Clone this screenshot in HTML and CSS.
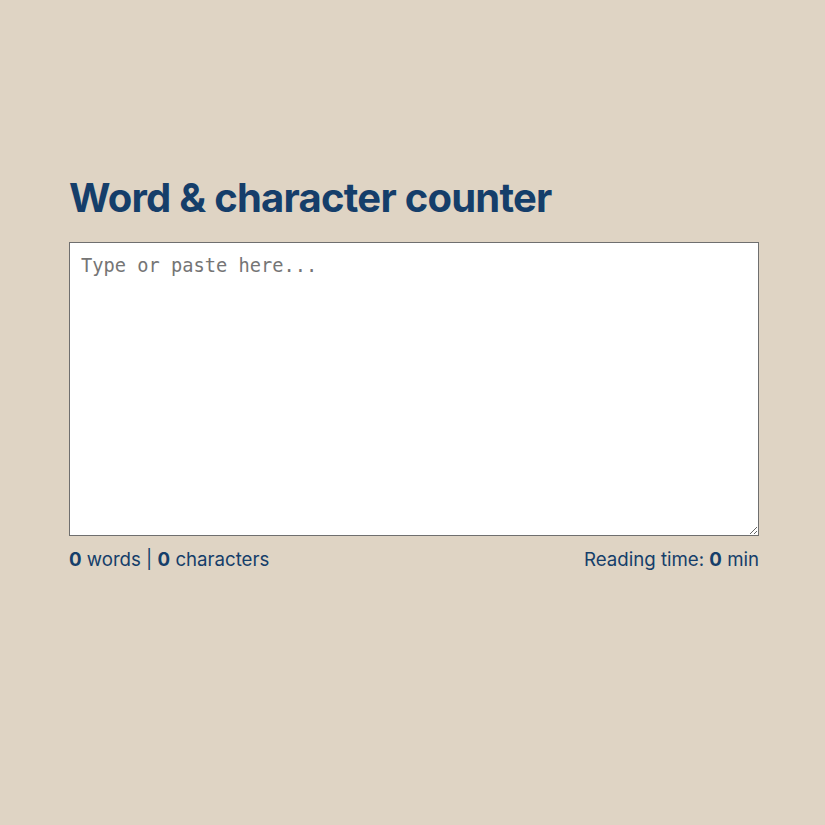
FILE: index.html
```html
<!DOCTYPE html>
<html lang="en">
<head>
  <meta charset="UTF-8">
  <meta name="viewport" content="width=device-width, initial-scale=1.0">
  <title>Word & character counter</title>
  <link rel="stylesheet" href="styles.css">
</head>
<body>
  <main class="counter">
    <h1>Word &amp; character counter</h1>
    <textarea id="text" placeholder="Type or paste here..."></textarea>
    <div class="stats">
      <p><strong id="words">0</strong> words | <strong id="chars">0</strong> characters</p>
      <p>Reading time: <strong id="time">0</strong> min</p>
    </div>
  </main>

  <script>
    const text = document.getElementById("text");

    text.addEventListener("input", function () {
      const value = text.value;
      const words = value.trim() ? value.trim().split(/\s+/).length : 0;
      document.getElementById("words").textContent = words;
      document.getElementById("chars").textContent = value.length;
      document.getElementById("time").textContent = Math.ceil(words / 200);
    });
  </script>
</body>
</html>
```

FILE: styles.css
```css
* {
  box-sizing: border-box;
  margin: 0;
  padding: 0;
}

body {
  font-family: 'Inter', sans-serif;
  background: #dfd4c4;
  color: #153e6a;
}

.counter {
  max-width: 690px;
  margin: 0 66px 0 69px;
  padding-top: 174px;
}

h1 {
  font-size: 40px;
  font-weight: 700;
  letter-spacing: -0.75px;
  line-height: 1.2;
  margin-bottom: 20px;
}

textarea {
  display: block;
  width: 100%;
  height: 294px;
  padding: 12px 11px;
  font-family: 'DejaVu Sans Mono', monospace;
  font-size: 18.7px;
  border: 1px solid #6f6f6f;
  background: #fff;
}

.stats {
  display: flex;
  justify-content: space-between;
  margin-top: 12px;
  font-size: 18.65px;
}
```
